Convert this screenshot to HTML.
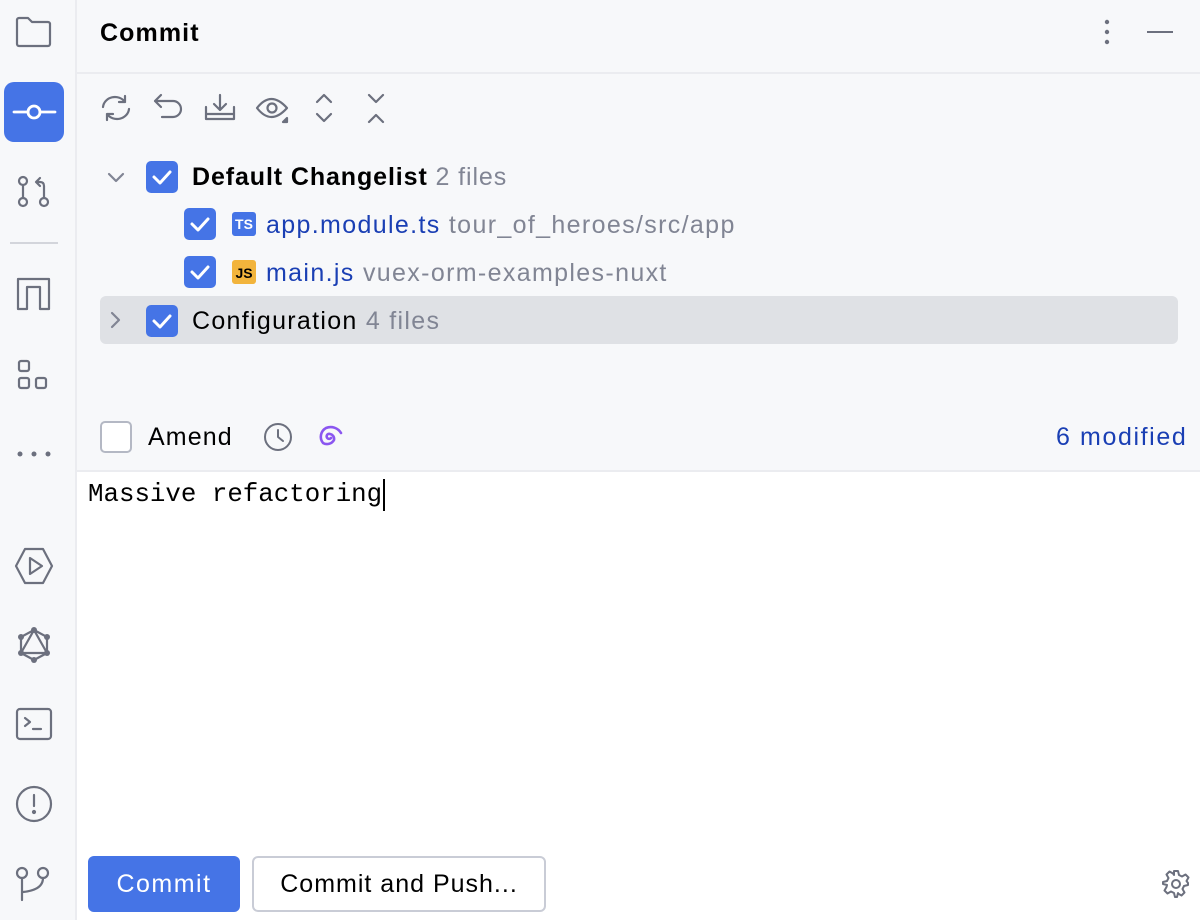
<!DOCTYPE html>
<html><head><style>
*{margin:0;padding:0;box-sizing:border-box}
body{width:1200px;height:920px;background:#f7f8fa;font-family:"Liberation Sans",sans-serif;position:relative;overflow:hidden;color:#000}
.a{position:absolute}
.cb{position:absolute;width:32px;height:32px;background:#4574e6;border-radius:5px}
.cb svg{position:absolute;left:0;top:0}
.t{position:absolute;font-size:25px;letter-spacing:1.1px;white-space:nowrap;line-height:30px}
.g{color:#818594}
.b{color:#1a3fb4}
svg.i{position:absolute;fill:none;stroke:#6c707e;stroke-width:2.2;stroke-linecap:round;stroke-linejoin:round}
</style></head><body>
<div class="a" style="left:75px;top:0;width:2px;height:920px;background:#ebecf0"></div>
<div class="a" style="left:77px;top:72px;width:1123px;height:2px;background:#ebecf0"></div>
<div class="a" style="left:77px;top:470px;width:1123px;height:450px;background:#fff;border-top:2px solid #ebecf0"></div>

<!-- sidebar -->
<svg class="i" style="left:14px;top:14px" width="40" height="36" viewBox="0 0 40 36"><path d="M3 6a2 2 0 0 1 2-2h9l4 4h16a2 2 0 0 1 2 2v20a2 2 0 0 1-2 2H5a2 2 0 0 1-2-2z"/></svg>
<div class="a" style="left:4px;top:82px;width:60px;height:60px;background:#4574e6;border-radius:10px"></div>
<svg class="i" style="left:4px;top:82px;stroke:#fff;stroke-width:2.8" width="60" height="60" viewBox="0 0 60 60"><circle cx="30" cy="30" r="6"/><path d="M10 30h14M36 30h15"/></svg>
<svg class="i" style="left:14px;top:172px" width="40" height="40" viewBox="0 0 40 40"><circle cx="9" cy="9" r="4"/><circle cx="9" cy="30" r="4"/><circle cx="30" cy="30" r="4"/><path d="M9 13v13M30 26V14q0-4-4-4h-3M26 6l-4 4 4 4"/></svg>
<div class="a" style="left:10px;top:242px;width:48px;height:2px;background:#d3d5db"></div>
<svg class="i" style="left:14px;top:274px" width="40" height="40" viewBox="0 0 40 40"><path d="M4 35V5h31v30h-9V13h-13v22z"/></svg>
<svg class="i" style="left:14px;top:356px" width="40" height="40" viewBox="0 0 40 40"><rect x="5" y="5" width="10" height="10" rx="2"/><rect x="5" y="22" width="10" height="10" rx="2"/><rect x="22" y="22" width="10" height="10" rx="2"/></svg>
<svg class="i" style="left:14px;top:440px;fill:#6c707e;stroke:none" width="40" height="30" viewBox="0 0 40 30"><circle cx="6" cy="14" r="2.5"/><circle cx="20" cy="14" r="2.5"/><circle cx="34" cy="14" r="2.5"/></svg>
<svg class="i" style="left:14px;top:546px" width="40" height="40" viewBox="0 0 40 40"><path d="M11 3h18l9 17-9 17H11L2 20z"/><path d="M16 12v16l12-8z"/></svg>
<svg class="i" style="left:14px;top:626px" width="40" height="40" viewBox="0 0 40 40"><path d="M20 4L33 27H7z M20 4L7 11v16l13 7 13-7V11z"/><g fill="#6c707e" stroke="none"><circle cx="20" cy="4" r="3"/><circle cx="7" cy="11" r="3"/><circle cx="33" cy="11" r="3"/><circle cx="7" cy="27" r="3"/><circle cx="33" cy="27" r="3"/><circle cx="20" cy="34" r="3"/></g></svg>
<svg class="i" style="left:14px;top:704px" width="40" height="40" viewBox="0 0 40 40"><rect x="3" y="5" width="34" height="30" rx="3"/><path d="M11 14l5 4-5 4M19 25h8"/></svg>
<svg class="i" style="left:14px;top:784px" width="40" height="40" viewBox="0 0 40 40"><circle cx="20" cy="20" r="17"/><path d="M20 11v11"/><circle cx="20" cy="28" r="1" fill="#6c707e"/></svg>
<svg class="i" style="left:14px;top:864px" width="40" height="40" viewBox="0 0 40 40"><circle cx="8" cy="9" r="5"/><circle cx="29" cy="9" r="5"/><path d="M8 14v22M29 14q0 12-20 14"/></svg>

<!-- header -->
<div class="t" style="left:100px;top:18px;font-weight:bold;color:#000">Commit</div>
<svg class="i" style="left:1096px;top:18px;fill:#6c707e;stroke:none" width="20" height="30" viewBox="0 0 20 30"><circle cx="11" cy="4" r="2.2"/><circle cx="11" cy="14" r="2.2"/><circle cx="11" cy="24" r="2.2"/></svg>
<div class="a" style="left:1147px;top:31px;width:26px;height:2px;background:#6c707e"></div>

<!-- toolbar -->
<svg class="i" style="left:98px;top:92px" width="36" height="32" viewBox="0 0 36 32"><path d="M5 15a12 11 0 0 1 22-5M31 17a12 11 0 0 1-22 5M27 4v6h-6M9 28v-6h6"/></svg>
<svg class="i" style="left:152px;top:92px" width="36" height="32" viewBox="0 0 36 32"><path d="M9 3L3 9l6 6M3 9h18a8 8 0 0 1 0 16H10"/></svg>
<svg class="i" style="left:203px;top:92px" width="36" height="32" viewBox="0 0 36 32"><path d="M17 3v15M11 12l6 6 6-6M3 15v12h28V15M3 22h28"/></svg>
<svg class="i" style="left:255px;top:92px" width="36" height="36" viewBox="0 0 36 36"><path d="M2 16q14-18 30 0q-16 18-30 0z"/><circle cx="17" cy="16" r="4.5"/><path d="M32 30l-4 0 4-4z" fill="#6c707e"/></svg>
<svg class="i" style="left:310px;top:92px" width="28" height="34" viewBox="0 0 28 34"><path d="M7 10l7-7 7 7M7 22l7 7 7-7"/></svg>
<svg class="i" style="left:362px;top:92px" width="28" height="34" viewBox="0 0 28 34"><path d="M7 3l7 7 7-7M7 30l7-7 7 7"/></svg>

<!-- tree -->
<svg class="i" style="left:106px;top:168px;stroke:#818594" width="20" height="20" viewBox="0 0 20 20"><path d="M3 6l7 7 7-7"/></svg>
<div class="cb" style="left:146px;top:161px"><svg width="32" height="32"><path d="M8 16l6 6 10-11" fill="none" stroke="#fff" stroke-width="3" stroke-linecap="round" stroke-linejoin="round"/></svg></div>
<div class="t" style="left:192px;top:162px;font-weight:bold;letter-spacing:0.9px">Default Changelist <span class="g" style="font-weight:normal">2 files</span></div>

<div class="cb" style="left:184px;top:208px"><svg width="32" height="32"><path d="M8 16l6 6 10-11" fill="none" stroke="#fff" stroke-width="3" stroke-linecap="round" stroke-linejoin="round"/></svg></div>
<div class="a" style="left:232px;top:212px;width:24px;height:24px;background:#4574e6;border-radius:3px;color:#fff;font-size:14px;font-weight:bold;line-height:24px;text-align:center">TS</div>
<div class="t" style="left:266px;top:210px;letter-spacing:1.35px"><span class="b">app.module.ts</span> <span class="g">tour_of_heroes/src/app</span></div>

<div class="cb" style="left:184px;top:256px"><svg width="32" height="32"><path d="M8 16l6 6 10-11" fill="none" stroke="#fff" stroke-width="3" stroke-linecap="round" stroke-linejoin="round"/></svg></div>
<div class="a" style="left:232px;top:260px;width:24px;height:24px;background:#f2b43c;border-radius:3px;color:#000;font-size:14px;font-weight:bold;line-height:26px;text-align:center">JS</div>
<div class="t" style="left:266px;top:258px;letter-spacing:1.35px"><span class="b">main.js</span> <span class="g">vuex-orm-examples-nuxt</span></div>

<div class="a" style="left:100px;top:296px;width:1078px;height:48px;background:#dfe1e5;border-radius:6px"></div>
<svg class="i" style="left:106px;top:310px;stroke:#818594" width="20" height="20" viewBox="0 0 20 20"><path d="M6 3l7 7-7 7"/></svg>
<div class="cb" style="left:146px;top:305px"><svg width="32" height="32"><path d="M8 16l6 6 10-11" fill="none" stroke="#fff" stroke-width="3" stroke-linecap="round" stroke-linejoin="round"/></svg></div>
<div class="t" style="left:192px;top:306px;letter-spacing:1.3px">Configuration <span class="g">4 files</span></div>

<!-- amend row -->
<div class="a" style="left:100px;top:421px;width:32px;height:32px;background:#fff;border:2px solid #b4b8c4;border-radius:5px"></div>
<div class="t" style="left:148px;top:422px">Amend</div>
<svg class="i" style="left:262px;top:421px;stroke-width:2" width="32" height="32" viewBox="0 0 32 32"><circle cx="16" cy="16" r="13"/><path d="M16 9v7l5 4"/></svg>
<svg class="i" style="left:314px;top:421px;stroke:#8b56f0;stroke-width:2.6" width="32" height="32" viewBox="0 0 32 32"><path d="M17 17a2.5 2.5 0 1 1-1-4 5 5 0 0 1 4 6 8 8 0 0 1-11 3 10 10 0 0 1 3-15 12 12 0 0 1 15 5"/></svg>
<div class="t" style="left:1056px;top:422px;color:#1a3fb4;letter-spacing:1.6px">6 modified</div>

<!-- editor -->
<div class="t" style="left:88px;top:480px;font-family:'Liberation Mono',monospace;font-size:25.8px;letter-spacing:0">Massive refactoring</div>
<div class="a" style="left:383px;top:479px;width:2px;height:32px;background:#000"></div>

<!-- buttons -->
<div class="a" style="left:88px;top:856px;width:152px;height:56px;background:#4574e6;border-radius:6px;color:#fff;font-size:25px;letter-spacing:1.5px;line-height:56px;text-align:center">Commit</div>
<div class="a" style="left:252px;top:856px;width:294px;height:56px;background:#fff;border:2px solid #c9ccd6;border-radius:6px;font-size:25px;letter-spacing:1px;line-height:52px;text-align:center">Commit and Push...</div>
<svg class="i" style="left:1160px;top:868px;stroke-width:2" width="32" height="32" viewBox="0 0 32 32"><circle cx="16" cy="16" r="4"/><path d="M14 3h4l1 4 3 1.5 3.5-2 3 3-2 3.5L28 15v2l-4 1-1.5 3 2 3.5-3 3-3.5-2L18 25l-1 4h-2l-1-4-3-1.5-3.5 2-3-3 2-3.5L7 17l-4-1v-2l4-1 1.5-3-2-3.5 3-3 3.5 2L14 7z"/></svg>
</body></html>
